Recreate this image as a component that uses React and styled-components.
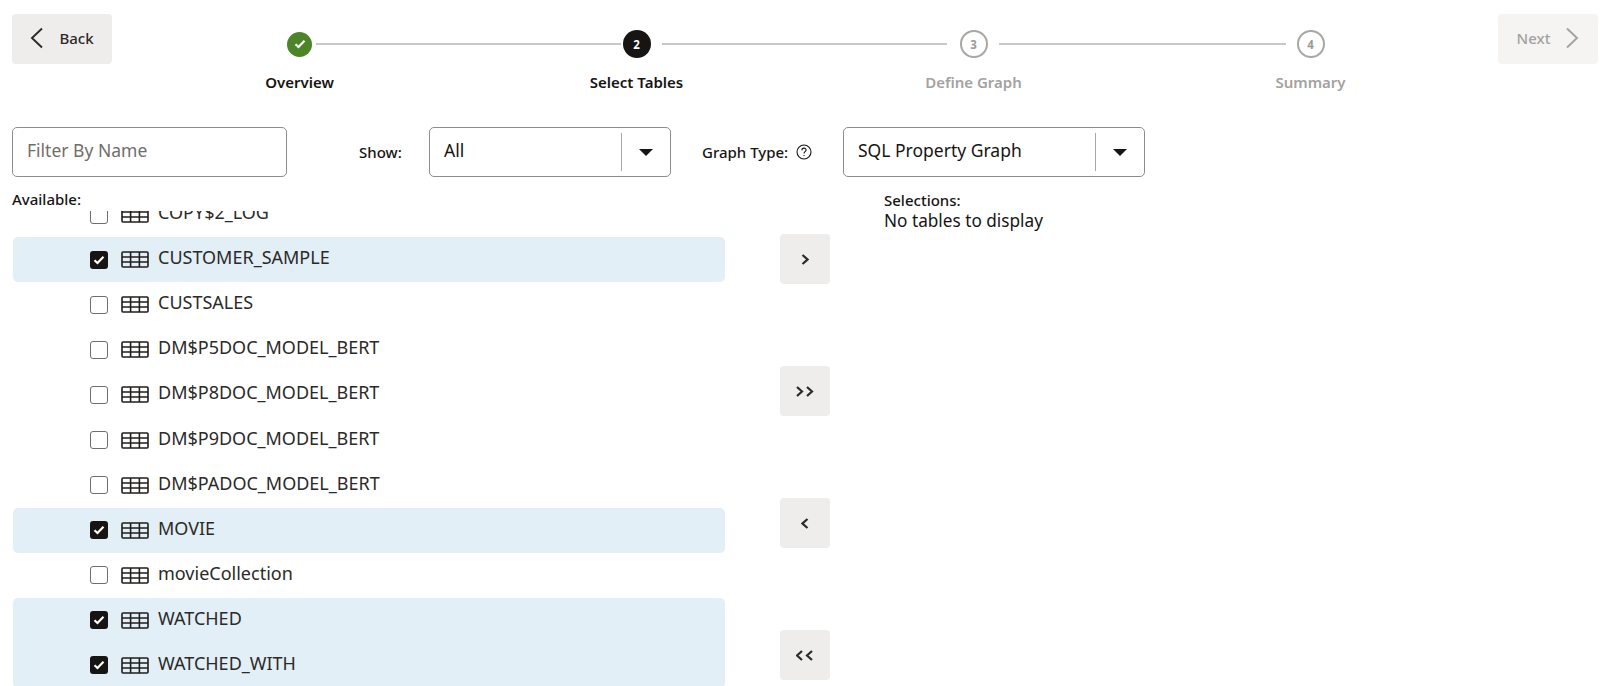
import React from 'react'
import styled, { createGlobalStyle } from 'styled-components'

const GlobalStyle = createGlobalStyle`
  html, body {
    margin: 0;
    height: 100%;
    overflow: hidden;
    background: #fff;
    color: #161513;
    font-family: "Noto Sans", "Open Sans", sans-serif;
  }
`

const Page = styled.div`
  height: 686px;
  overflow: hidden;
  box-sizing: border-box;
  padding: 14px 14px 0 12px;
`

const Header = styled.header`
  display: flex;
  align-items: flex-start;
  height: 113px;
`

const NavButton = styled.button`
  display: flex;
  align-items: center;
  justify-content: center;
  gap: 15px;
  box-sizing: border-box;
  width: 100px;
  height: 50px;
  padding: 0 0 3px;
  border: 0;
  border-radius: 4px;
  background: ${props => (props.$disabled ? '#f5f4f3' : '#eeedeb')};
  color: ${props => (props.$disabled ? '#a3a29f' : '#2b2a28')};
  font: 500 15px "Noto Sans", sans-serif;
`

const Stepper = styled.ol`
  flex: 1;
  display: grid;
  grid-template-columns: repeat(4, 337px);
  justify-content: center;
  margin: 15px 0 0;
  padding: 0;
  list-style: none;
`

const Step = styled.li`
  display: flex;
  flex-direction: column;
  align-items: stretch;
`

const Track = styled.div`
  display: grid;
  grid-template-columns: 1fr 28px 1fr;
  align-items: center;
  justify-items: center;
  height: 30px;
`

const TrackLine = styled.span`
  justify-self: stretch;
  height: 2px;
  margin-left: ${props => props.$left || 0}px;
  margin-right: ${props => props.$right || 0}px;
  background: ${props => (props.$hidden ? 'transparent' : '#c9c8c6')};
`

const Circle = styled.span`
  display: flex;
  align-items: center;
  justify-content: center;
  box-sizing: border-box;
  width: ${props => (props.$state === 'done' ? 25 : 28)}px;
  height: ${props => (props.$state === 'done' ? 25 : 28)}px;
  border-radius: 50%;
  font-size: 11.5px;
  font-weight: 700;
  background: ${props =>
    props.$state === 'done'
      ? '#4c8527'
      : props.$state === 'current'
        ? '#161513'
        : '#fff'};
  color: ${props => (props.$state === 'todo' ? '#9b9a97' : '#fff')};
  border: ${props => (props.$state === 'todo' ? '2px solid #a8a7a4' : '0')};
`

const StepLabel = styled.span`
  margin-top: 13px;
  text-align: center;
  font-size: 15px;
  line-height: 20px;
  font-weight: 600;
  color: ${props => (props.$muted ? '#a3a29f' : '#161513')};
`

const Toolbar = styled.div`
  display: flex;
  align-items: center;
  height: 50px;
`

const FilterInput = styled.input`
  box-sizing: border-box;
  width: 275px;
  height: 50px;
  padding: 0 14px 4px;
  border: 1px solid #8f8d8a;
  border-radius: 5px;
  font: 17.5px "Noto Sans", sans-serif;
  color: #161513;

  &::placeholder {
    color: #6f6e6b;
    opacity: 1;
  }
`

const FieldLabel = styled.label`
  display: flex;
  align-items: center;
  gap: 8px;
  width: ${props => props.$width}px;
  margin-left: ${props => props.$offset}px;
  font-size: 15px;
  font-weight: 500;
  white-space: nowrap;
`

const Select = styled.div`
  display: flex;
  align-items: center;
  box-sizing: border-box;
  width: ${props => props.$width}px;
  height: 50px;
  padding-left: 14px;
  border: 1px solid #8f8d8a;
  border-radius: 5px;
  font-size: 17.5px;
`

const SelectValue = styled.span`
  flex: 1;
  margin-bottom: 5px;
`

const SelectArrow = styled.span`
  display: flex;
  align-items: center;
  justify-content: center;
  width: 48px;
  height: 38px;
  border-left: 1px solid #a8a7a4;
`

const Caret = styled.span`
  width: 0;
  height: 0;
  border-left: 7px solid transparent;
  border-right: 7px solid transparent;
  border-top: 7px solid #161513;
`

const Columns = styled.div`
  display: flex;
  margin-top: 14px;
`

const AvailableColumn = styled.section`
  width: 713px;
  flex: none;
`

const ColumnTitle = styled.div`
  font-size: 15px;
  line-height: 17px;
  font-weight: 500;
`

const ListViewport = styled.div`
  height: 480px;
  margin-top: 3px;
  overflow: hidden;
`

const List = styled.ul`
  margin: -19px 0 0 1px;
  padding: 0;
  list-style: none;
`

const Row = styled.li`
  display: flex;
  align-items: center;
  box-sizing: border-box;
  height: 45.1px;
  padding-left: 77px;
  font-size: 18px;
  color: #2b2a28;
  background: ${props => (props.$selected ? '#e2eff6' : 'transparent')};
  border-top-left-radius: ${props => (props.$top ? 5 : 0)}px;
  border-top-right-radius: ${props => (props.$top ? 5 : 0)}px;
  border-bottom-left-radius: ${props => (props.$bottom ? 5 : 0)}px;
  border-bottom-right-radius: ${props => (props.$bottom ? 5 : 0)}px;
`

const RowName = styled.span`
  margin-bottom: 5px;
`

const Checkbox = styled.span`
  display: flex;
  align-items: center;
  justify-content: center;
  flex: none;
  box-sizing: border-box;
  width: 18px;
  height: 18px;
  margin-right: 13px;
  border-radius: 3px;
  background: ${props => (props.$checked ? '#161513' : '#fff')};
  border: ${props => (props.$checked ? '0' : '1.5px solid #6f6e6b')};
`

const TableGlyph = styled.svg`
  flex: none;
  width: 28px;
  height: 17px;
  margin-right: 9px;
`

const TransferColumn = styled.div`
  display: flex;
  flex-direction: column;
  gap: 82px;
  flex: none;
  margin: 43px 0 0 55px;
`

const TransferButton = styled.button`
  display: flex;
  align-items: center;
  justify-content: center;
  width: 50px;
  height: 50px;
  padding: 0;
  border: 0;
  border-radius: 4px;
  background: #eeedeb;
`

const SelectionsColumn = styled.section`
  margin: 1px 0 0 54px;
`

const EmptyText = styled.div`
  font-size: 17.2px;
  line-height: 23px;
`

const Chevron = ({ left, color = '#2b2a28' }) => (
  <svg width="14" height="22" viewBox="0 0 14 22" fill="none">
    <path
      d={left ? 'M12 1.5 2 11l10 9.5' : 'M2 1.5 12 11 2 20.5'}
      stroke={color}
      strokeWidth="1.9"
    />
  </svg>
)

const SmallChevrons = ({ left, double }) => {
  const one = x =>
    left
      ? `M${x + 5} 1 ${x} 5.5 ${x + 5} 10`
      : `M${x} 1 ${x + 5} 5.5 ${x} 10`
  return (
    <svg width={double ? 18 : 8} height="11" viewBox={`0 0 ${double ? 18 : 8} 11`} fill="none">
      <path d={double ? `${one(1)} ${one(11)}` : one(1.5)} stroke="#2b2a28" strokeWidth="2.2" />
    </svg>
  )
}

const TableIcon = () => (
  <TableGlyph viewBox="0 0 28 17" fill="none" stroke="#1f1e1c" strokeWidth="1.6">
    <rect x="1" y="1" width="26" height="15" rx="1" />
    <path d="M1 6h26M1 11h26M9.6 1v15M18.4 1v15" />
  </TableGlyph>
)

const CheckMark = () => (
  <svg width="12" height="10" viewBox="0 0 12 10" fill="none">
    <path d="M1.5 5.2 4.5 8 10.5 1.8" stroke="#fff" strokeWidth="2.2" />
  </svg>
)

const HelpIcon = () => (
  <svg width="16" height="16" viewBox="0 0 16 16" fill="none" stroke="#161513">
    <circle cx="8" cy="8" r="7" strokeWidth="1.1" />
    <path d="M5.9 6.2c0-2.7 4.2-2.7 4.2-.1 0 1.6-2.1 1.6-2.1 3.4" strokeWidth="1.1" />
    <circle cx="8" cy="11.6" r=".7" fill="#161513" stroke="none" />
  </svg>
)

const steps = [
  { label: 'Overview', state: 'done', leftGap: 0, rightGap: 2, first: true },
  { label: 'Select Tables', state: 'current', number: 2, leftGap: 2, rightGap: 11 },
  { label: 'Define Graph', state: 'todo', number: 3, leftGap: 13, rightGap: 11 },
  { label: 'Summary', state: 'todo', number: 4, leftGap: 11, rightGap: 0, last: true }
]

const tables = [
  { name: 'COPY$2_LOG' },
  { name: 'CUSTOMER_SAMPLE', selected: true },
  { name: 'CUSTSALES' },
  { name: 'DM$P5DOC_MODEL_BERT' },
  { name: 'DM$P8DOC_MODEL_BERT' },
  { name: 'DM$P9DOC_MODEL_BERT' },
  { name: 'DM$PADOC_MODEL_BERT' },
  { name: 'MOVIE', selected: true },
  { name: 'movieCollection' },
  { name: 'WATCHED', selected: true },
  { name: 'WATCHED_WITH', selected: true }
]

export default function App() {
  return (
    <>
      <GlobalStyle />
      <Page>
        <Header>
          <NavButton>
            <Chevron left />
            Back
          </NavButton>

          <Stepper>
            {steps.map(step => (
              <Step key={step.label}>
                <Track>
                  <TrackLine $hidden={step.first} $right={step.leftGap} />
                  <Circle $state={step.state}>
                    {step.state === 'done' ? <CheckMark /> : step.number}
                  </Circle>
                  <TrackLine $hidden={step.last} $left={step.rightGap} />
                </Track>
                <StepLabel $muted={step.state === 'todo'}>{step.label}</StepLabel>
              </Step>
            ))}
          </Stepper>

          <NavButton $disabled>
            Next
            <Chevron color="#a3a29f" />
          </NavButton>
        </Header>

        <Toolbar>
          <FilterInput placeholder="Filter By Name" />
          <FieldLabel $offset={72} $width={70}>Show:</FieldLabel>
          <Select $width={242}>
            <SelectValue>All</SelectValue>
            <SelectArrow>
              <Caret />
            </SelectArrow>
          </Select>
          <FieldLabel $offset={31} $width={141}>
            Graph Type:
            <HelpIcon />
          </FieldLabel>
          <Select $width={302}>
            <SelectValue>SQL Property Graph</SelectValue>
            <SelectArrow>
              <Caret />
            </SelectArrow>
          </Select>
        </Toolbar>

        <Columns>
          <AvailableColumn>
            <ColumnTitle>Available:</ColumnTitle>
            <ListViewport>
              <List>
                {tables.map((table, index) => (
                  <Row
                    key={table.name}
                    $selected={table.selected}
                    $top={table.selected && !tables[index - 1]?.selected}
                    $bottom={table.selected && !tables[index + 1]?.selected}
                  >
                    <Checkbox $checked={table.selected}>
                      {table.selected && <CheckMark />}
                    </Checkbox>
                    <TableIcon />
                    <RowName>{table.name}</RowName>
                  </Row>
                ))}
              </List>
            </ListViewport>
          </AvailableColumn>

          <TransferColumn>
            <TransferButton>
              <SmallChevrons />
            </TransferButton>
            <TransferButton>
              <SmallChevrons double />
            </TransferButton>
            <TransferButton>
              <SmallChevrons left />
            </TransferButton>
            <TransferButton>
              <SmallChevrons left double />
            </TransferButton>
          </TransferColumn>

          <SelectionsColumn>
            <ColumnTitle>Selections:</ColumnTitle>
            <EmptyText>No tables to display</EmptyText>
          </SelectionsColumn>
        </Columns>
      </Page>
    </>
  )
}
